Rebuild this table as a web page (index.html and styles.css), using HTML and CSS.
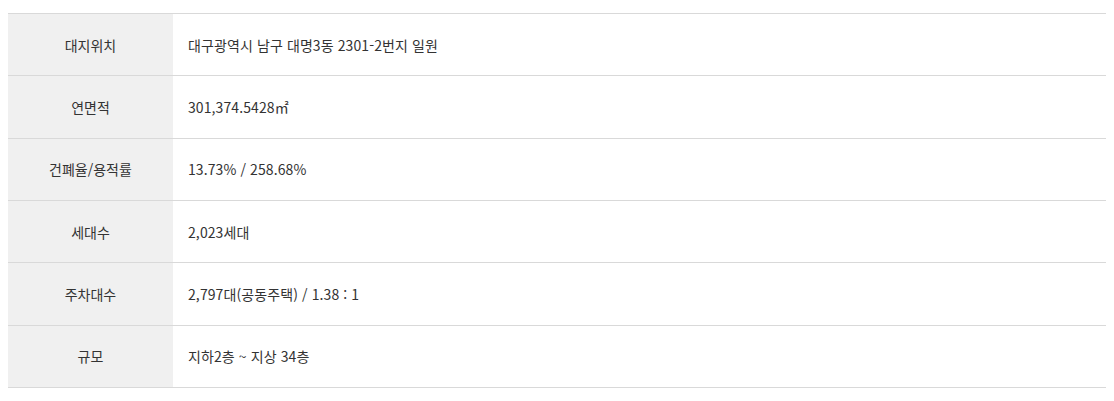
FILE: index.html
```html
<!DOCTYPE html>
<html lang="ko">
<head>
<meta charset="utf-8">
<link rel="stylesheet" href="styles.css">
</head>
<body>
<table class="info">
  <tbody>
    <tr><th>대지위치</th><td>대구광역시 남구 대명3동 2301-2번지 일원</td></tr>
    <tr><th>연면적</th><td>301,374.5428㎡</td></tr>
    <tr><th>건폐율/용적률</th><td>13.73% / 258.68%</td></tr>
    <tr><th>세대수</th><td>2,023세대</td></tr>
    <tr><th>주차대수</th><td>2,797대(공동주택) / 1.38 : 1</td></tr>
    <tr><th>규모</th><td>지하2층 ~ 지상 34층</td></tr>
  </tbody>
</table>
</body>
</html>
```
FILE: styles.css
```css
body {
  margin: 8px;
  background: #fff;
  font-family: "Noto Sans CJK KR", "Noto Sans", sans-serif;
}
.info {
  width: 100%;
  margin-top: 5px;
  border-collapse: collapse;
  border-top: 1px solid #d9d9d9;
  font-size: 14px;
  color: #333;
}
.info th,
.info td {
  height: 62.33px;
  padding: 0 15px;
  border-bottom: 1px solid #d9d9d9;
  font-weight: normal;
  box-sizing: border-box;
  vertical-align: middle;
}
.info th {
  width: 165px;
  padding: 0;
  background: #f0f0f0;
  text-align: center;
}
.info td {
  text-align: left;
  letter-spacing: 0.1px;
}
```
